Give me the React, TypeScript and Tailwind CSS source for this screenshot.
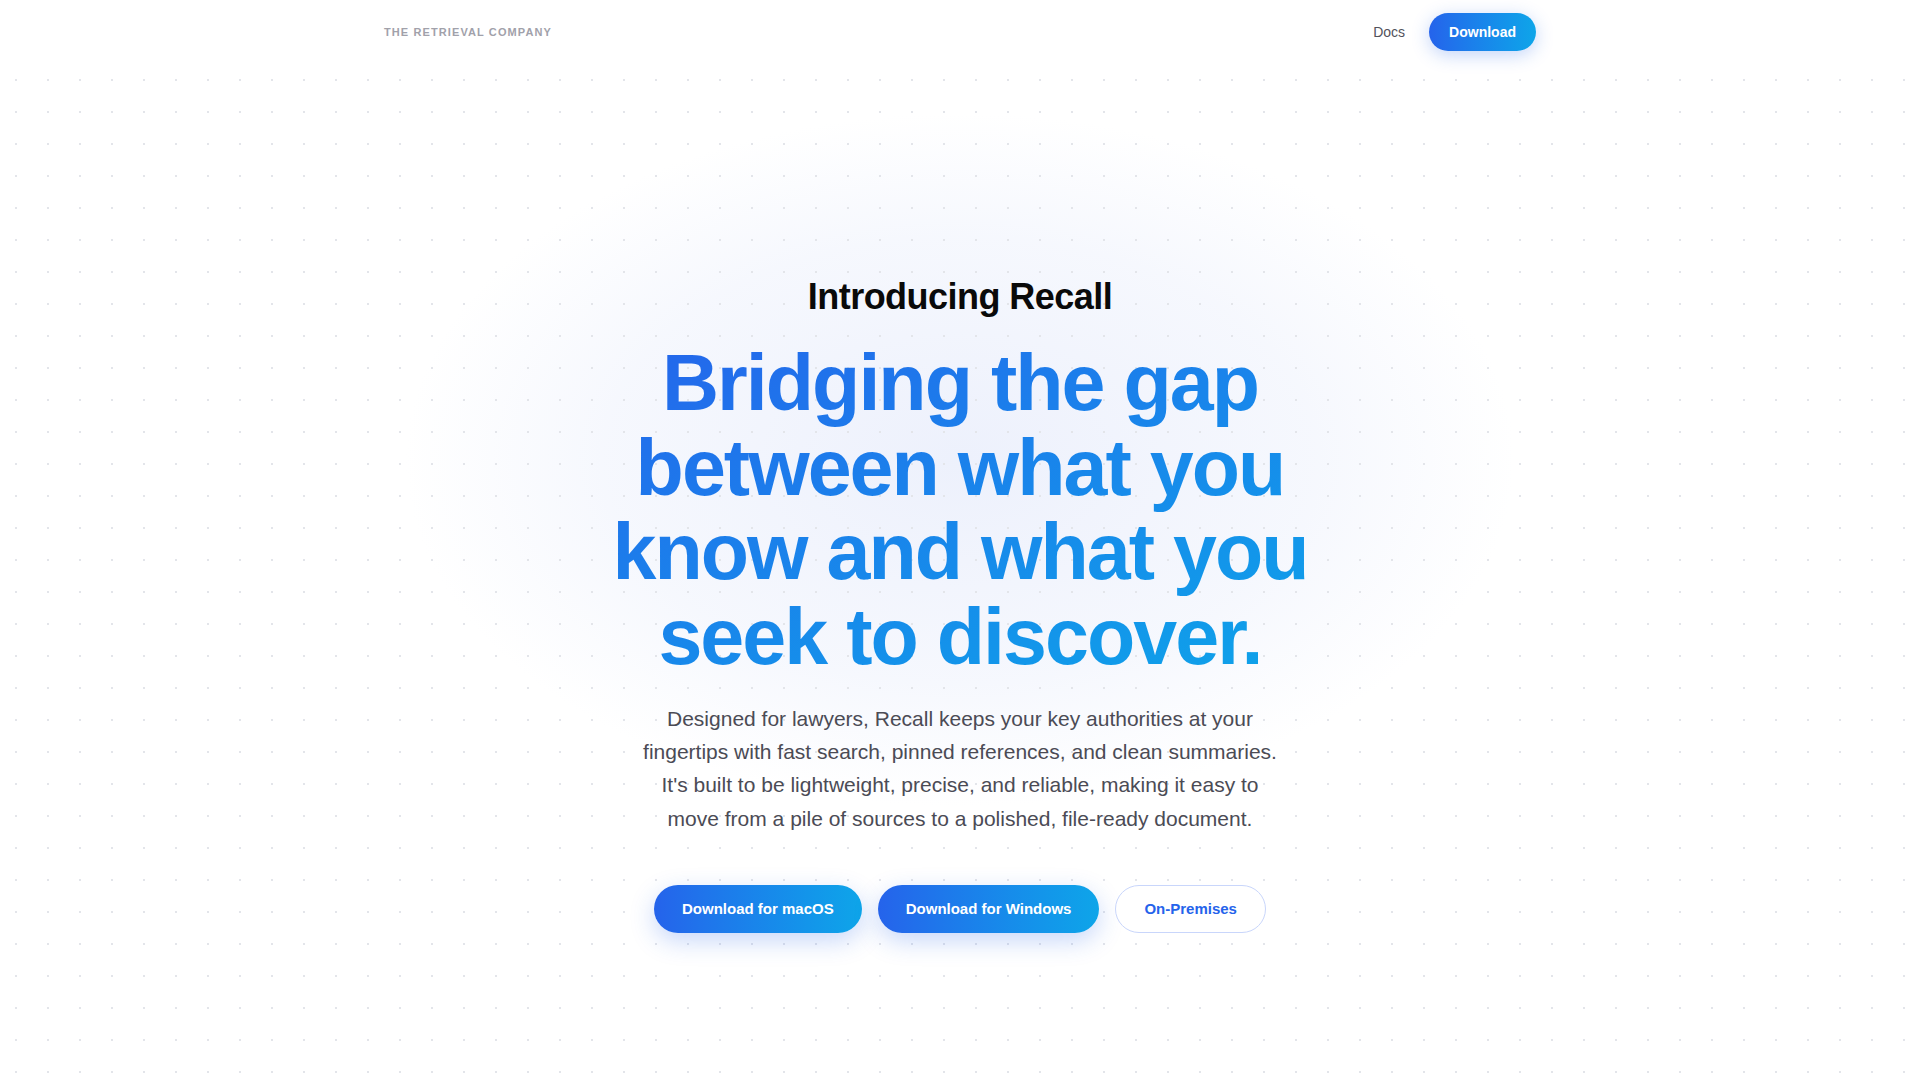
import React from "react";

export default function App() {
  return (
    <div className="min-h-screen w-full bg-white font-['Liberation_Sans',Arial,sans-serif] antialiased">
      <header className="h-16 bg-white">
        <div className="mx-auto flex h-16 max-w-6xl items-center justify-between">
          <span className="text-[11px] font-bold uppercase tracking-widest text-[#a1a1aa]">
            The Retrieval Company
          </span>
          <nav className="flex items-center gap-6">
            <a className="text-[14px] text-[#52525b]" href="#">
              Docs
            </a>
            <button className="h-[38px] rounded-full bg-gradient-to-r from-[#2563eb] to-[#0ea5e9] px-5 text-[14px] font-bold text-white shadow-[0_4px_18px_rgba(37,99,235,0.28)]">
              Download
            </button>
          </nav>
        </div>
      </header>

      <main className="relative min-h-[1016px] overflow-hidden">
        <div className="pointer-events-none absolute left-1/2 top-[46px] h-[700px] w-[1120px] -translate-x-1/2 rounded-full bg-[radial-gradient(ellipse_at_center,rgba(236,240,252,0.95)_0%,rgba(242,245,253,0.7)_45%,rgba(255,255,255,0)_70%)]" />
        <div className="pointer-events-none absolute inset-0 bg-[radial-gradient(#e3e5ea_1px,transparent_1.2px)] bg-[length:32px_32px]" />

        <section className="relative z-10 flex flex-col items-center pt-[213px] text-center">
          <h2 className="text-[36px] font-bold leading-[40px] tracking-[-0.015em] text-[#0a0a0a]">
            Introducing Recall
          </h2>
          <h1 className="mt-6 max-w-3xl bg-gradient-to-br from-[#2563eb] to-[#0ea5e9] bg-clip-text text-[79px] font-bold leading-[1.07] tracking-tight text-transparent">
            Bridging the gap between what you know and what you seek to discover.
          </h1>
          <p className="mt-[23px] max-w-[650px] text-[21px] leading-[1.58] text-[#4b4b55]">
            Designed for lawyers, Recall keeps your key authorities at your fingertips with fast
            search, pinned references, and clean summaries. It's built to be lightweight, precise,
            and reliable, making it easy to move from a pile of sources to a polished, file-ready
            document.
          </p>
          <div className="mt-[50px] flex items-center gap-4">
            <button className="h-12 rounded-full bg-gradient-to-r from-[#2563eb] to-[#0ea5e9] px-7 text-[15px] font-bold text-white shadow-[0_8px_24px_rgba(37,99,235,0.25)]">
              Download for macOS
            </button>
            <button className="h-12 rounded-full bg-gradient-to-r from-[#2563eb] to-[#0ea5e9] px-7 text-[15px] font-bold text-white shadow-[0_8px_24px_rgba(37,99,235,0.25)]">
              Download for Windows
            </button>
            <button className="h-12 rounded-full border border-[#c9d6fb] bg-white px-7 text-[15px] font-bold text-[#2563eb]">
              On-Premises
            </button>
          </div>
        </section>
      </main>
    </div>
  );
}
